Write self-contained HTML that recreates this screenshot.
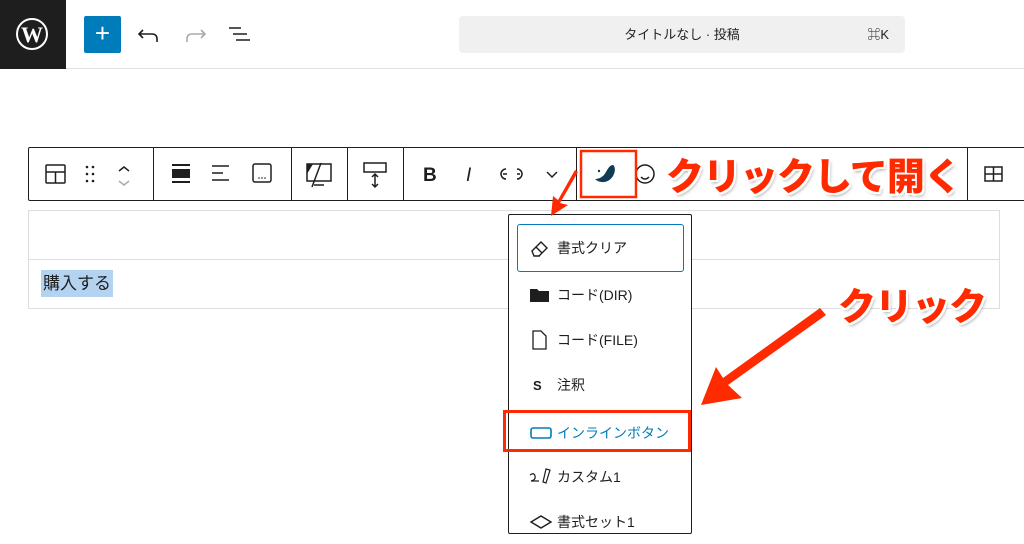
<!DOCTYPE html>
<html><head><meta charset="utf-8"><style>
*{box-sizing:border-box;margin:0;padding:0}
body{width:1024px;height:521px;overflow:hidden;background:#fff;font-family:"Liberation Sans","Noto Sans CJK JP",sans-serif;position:relative;color:#1e1e1e}
.a{position:absolute}
.top{left:0;top:0;width:1024px;height:69px;border-bottom:1px solid #e0e0e0}
.sep{position:absolute;top:0;width:1px;height:53px;background:#1e1e1e}
.big{font-weight:900;color:#ff2a00;font-size:38px;letter-spacing:-1px;text-shadow:2px 0 #fff,-2px 0 #fff,0 2px #fff,0 -2px #fff,2px 2px #fff,-2px -2px #fff,2px -2px #fff,-2px 2px #fff,2px 3px 3px rgba(0,0,0,.35)}
.item{position:absolute;left:0;width:183px;height:44px;font-size:14px;display:flex;align-items:center;padding-left:20px}
.item span.t{position:absolute;left:48px}
</style></head><body>
<div class="a top"></div>
<div class="a" style="left:0;top:0;width:66px;height:69px;background:#1e1e1e"></div>
<svg class="a" style="left:15px;top:17px" width="34" height="34" viewBox="0 0 34 34"><circle cx="17" cy="17" r="15" fill="none" stroke="#fff" stroke-width="2"/><text x="17" y="25" text-anchor="middle" font-family="Liberation Serif" font-weight="bold" font-size="22" fill="#fff">W</text></svg>
<div class="a" style="left:84px;top:16px;width:37px;height:37px;background:#007cba;border-radius:2px;color:#fff;font-size:26px;line-height:35px;text-align:center">+</div>
<svg class="a" style="left:137px;top:24px" width="24" height="22"><path d="M6 6 L2 10 L6 14 M2 10 H15 Q20 10 20 15 V18" fill="none" stroke="#1e1e1e" stroke-width="1.6"/></svg>
<svg class="a" style="left:183px;top:24px" width="24" height="22"><path d="M18 6 L22 10 L18 14 M22 10 H9 Q4 10 4 15 V18" fill="none" stroke="#aaa" stroke-width="1.6"/></svg>
<svg class="a" style="left:228px;top:26px" width="24" height="18"><path d="M1 2H13M5 8H19M8 14H22" stroke="#1e1e1e" stroke-width="1.6"/></svg>
<div class="a" style="left:459px;top:16px;width:446px;height:37px;background:#f0f0f0;border-radius:4px;font-size:13px;line-height:37px;text-align:center">タイトルなし · 投稿<span style="position:absolute;right:16px;font-size:13px">⌘K</span></div>

<div class="a" style="left:28px;top:147px;width:1010px;height:54px;border:1px solid #1e1e1e;border-radius:2px">
<div class="sep" style="left:124px"></div><div class="sep" style="left:262px"></div><div class="sep" style="left:318px"></div><div class="sep" style="left:374px"></div><div class="sep" style="left:547px"></div><div class="sep" style="left:938px"></div>
</div>
<svg class="a" style="left:0;top:147px" width="1024" height="54" font-family="Liberation Sans">
<g fill="none" stroke="#1e1e1e" stroke-width="1.5">
<rect x="46" y="18" width="19" height="18" rx="1"/><path d="M46 25H65M55.5 25V36"/>
<path d="M119 24l5-4 5 4"/><path d="M119 34l5 4 5-4" stroke="#aaa"/>
<path d="M212 19H229M212 26H223M212 33H229"/>
<rect x="253" y="17" width="18" height="18" rx="2"/>
<rect x="307" y="17" width="24" height="17"/><path d="M314 38h10M312 40l9-24"/>
<rect x="364" y="16" width="22" height="9"/><path d="M375 27v13M372 30l3-3 3 3M372 37l3 3 3-3"/>
<path d="M503 27h4M517 27h3M506 22a5 5 0 000 10M517 22a5 5 0 010 10"/>
<path d="M547 25l5 5 5-5"/>
<circle cx="645" cy="27" r="9"/><path d="M641 30q4 4 8 0"/>
<rect x="985" y="20" width="17" height="14"/><path d="M985 27h17M993.5 20v14"/>
</g>
<g fill="#1e1e1e"><circle cx="87" cy="20" r="1.3"/><circle cx="93" cy="20" r="1.3"/><circle cx="87" cy="27" r="1.3"/><circle cx="93" cy="27" r="1.3"/><circle cx="87" cy="34" r="1.3"/><circle cx="93" cy="34" r="1.3"/>
<rect x="172" y="17" width="18" height="2"/><rect x="172" y="22" width="18" height="9"/><rect x="172" y="34" width="18" height="2"/>
<circle cx="259" cy="31" r=".8"/><circle cx="262" cy="31" r=".8"/><circle cx="265" cy="31" r=".8"/>
<path d="M307 17h6l-6 10z"/>
<text x="423" y="34" font-size="19" font-weight="bold">B</text>
<text x="466" y="34" font-size="19" font-style="italic">I</text>
</g>
<path d="M595 32 C600 37 609 36 613 29 C616 24 615 19 613 18 C609 18 607 24 604 28 C601 31 598 32 595 32z" fill="#0f3b53"/><circle cx="599" cy="24" r="1.2" fill="#0f3b53"/>
<rect x="581" y="4" width="55" height="46" fill="none" stroke="#ff2a00" stroke-width="2.5"/>
</svg>
<div class="a big" style="left:666px;top:146px;white-space:nowrap">クリックして開く</div>

<div class="a" style="left:28px;top:210px;width:972px;height:99px;border:1px solid #ddd"></div>
<div class="a" style="left:28px;top:259px;width:972px;height:1px;background:#ddd"></div>
<div class="a" style="left:41px;top:270px;height:27px;padding:0 2px;background:#b4d3f0;font-size:17px;line-height:27px">購入する</div>

<div class="a" style="left:508px;top:214px;width:184px;height:320px;border:1px solid #1e1e1e;border-radius:2px;background:#fff">
<div class="a" style="left:8px;top:9px;width:167px;height:48px;border:1.5px solid #007cba;border-radius:3px"></div>
<div class="item" style="top:11px"><svg width="22" height="20"><path d="M3 13l9-9 6 6-8 8H5z M7 9l6 6 M8 18h3" fill="none" stroke="#1e1e1e" stroke-width="1.4"/></svg><span class="t">書式クリア</span></div>
<div class="item" style="top:58px"><svg width="22" height="20"><path d="M1 4h7l2 2h10v11H1z" fill="#1e1e1e"/></svg><span class="t">コード(DIR)</span></div>
<div class="item" style="top:103px"><svg width="22" height="20"><path d="M4 1h8l5 5v13H4z" fill="none" stroke="#1e1e1e" stroke-width="1.3"/></svg><span class="t">コード(FILE)</span></div>
<div class="item" style="top:148px"><b style="font-size:13px;margin-left:4px">S</b><span class="t">注釈</span></div>
<div class="item" style="top:196px;color:#007cba"><svg width="26" height="20"><rect x="2" y="5" width="20" height="10" rx="2" fill="none" stroke="#007cba" stroke-width="1.6"/></svg><span class="t">インラインボタン</span></div>
<div class="item" style="top:240px"><svg width="26" height="20"><path d="M1 8q4-3 5 1t-4 5h8M17 2l4 1-4 13-3-1z" fill="none" stroke="#1e1e1e" stroke-width="1.2"/></svg><span class="t">カスタム1</span></div>
<div class="item" style="top:285px"><svg width="26" height="20"><path d="M2 10l10-6 10 6-10 6z" fill="none" stroke="#1e1e1e" stroke-width="1.4"/></svg><span class="t">書式セット1</span></div>
</div>
<div class="a" style="left:503px;top:410px;width:188px;height:42px;border:3px solid #ff2a00"></div>

<svg class="a" style="left:0;top:0" width="1024" height="521">
<path d="M578 172 L560 203 L568 205 L551 216 L553 196 L558 200 L575 170z" fill="#ff2a00"/>
<path d="M820 308 L826 315 L728 385 L742 398 L701 405 L716 367 L723 378z" fill="#ff2a00"/>
</svg>
<div class="a big" style="left:838px;top:276px">クリック</div>
</body></html>
